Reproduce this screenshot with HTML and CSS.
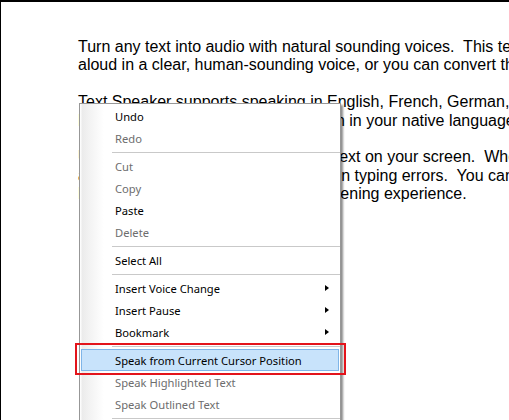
FILE: index.html
```
<!DOCTYPE html>
<html>
<head>
<meta charset="utf-8">
<link rel="stylesheet" href="styles.css">
</head>
<body>
<div class="page">
  <p class="para">
    <span class="ln">Turn any text into audio with natural sounding voices.&nbsp; This text to speech software can read your text</span>
    <span class="ln">aloud in a clear, human-sounding voice, or you can convert the text to audio files.</span>
  </p>
  <p class="para">
    <span class="ln">Text Speaker supports speaking in English, French, German, Spanish and Italian.</span>
    <span class="ln">Hear email and all web pages spoken in your native language.</span>
  </p>
  <p class="para">
    <span class="ln">Use Text Speaker to proofread your text on your screen.&nbsp; When you hear it read</span>
    <span class="ln">aloud, you will easily find any common typing errors.&nbsp; You can even adjust the</span>
    <span class="ln">Bookmark your place for pleasant listening experience.</span>
  </p>
</div>

<div class="menu">
  <div class="item">Undo</div>
  <div class="item off">Redo</div>
  <div class="sep"></div>
  <div class="item off">Cut</div>
  <div class="item off">Copy</div>
  <div class="item">Paste</div>
  <div class="item off">Delete</div>
  <div class="sep"></div>
  <div class="item">Select All</div>
  <div class="sep"></div>
  <div class="item">Insert Voice Change<span class="arrow"></span></div>
  <div class="item">Insert Pause<span class="arrow"></span></div>
  <div class="item">Bookmark<span class="arrow"></span></div>
  <div class="sep"></div>
  <div class="item hot">Speak from Current Cursor Position</div>
  <div class="item off">Speak Highlighted Text</div>
  <div class="item off">Speak Outlined Text</div>
  <div class="sep"></div>
</div>

<div class="callout"></div>
</body>
</html>
```

FILE: styles.css
```
html, body {
  margin: 0;
  padding: 0;
  background: #fff;
}
body {
  width: 509px;
  height: 420px;
  overflow: hidden;
  position: relative;
}
.page {
  box-sizing: border-box;
  height: 420px;
  overflow: hidden;
  border-top: 2px solid #000;
  border-left: 1px solid #000;
  padding: 36px 0 0 77px;
  font-family: "Liberation Sans", Arial, sans-serif;
  font-size: 16px;
  line-height: 18.4px;
  color: #000;
}
.para {
  margin: 0 0 18.4px 0;
}
.ln {
  display: block;
  white-space: nowrap;
}
.menu {
  position: absolute;
  left: 79px;
  top: 103px;
  width: 260px;
  height: 330px;
  border: 1px solid #979797;
  padding-top: 1px;
  background: linear-gradient(to right, #fcfcfc 0, #fcfcfc 1px, #ebebeb 2px, #f3f3f3 10px, #fbfbfb 19px, #fff 24px);
  box-shadow: 2px 2px 2px rgba(0, 0, 0, 0.45);
  font-family: "Noto Sans", "Open Sans", sans-serif;
  font-size: 11.2px;
  color: #000;
}
.item {
  box-sizing: border-box;
  height: 22px;
  margin: 0 1px;
  padding-left: 33px;
  border: 1px solid transparent;
  display: flex;
  align-items: center;
  white-space: nowrap;
}
.item.off {
  color: #6d6d6d;
}
.item.hot {
  background: #c8e3fb;
  border-color: #7fb5e8;
}
.arrow {
  margin-left: auto;
  margin-right: 9px;
  width: 0;
  height: 0;
  border-left: 4px solid #000;
  border-top: 3.5px solid transparent;
  border-bottom: 3.5px solid transparent;
}
.sep {
  height: 6px;
  padding-left: 32px;
  display: flex;
  align-items: center;
}
.sep::before {
  content: "";
  flex: 1;
  height: 1px;
  background: #c9c9c9;
}
.callout {
  position: absolute;
  left: 75px;
  top: 343px;
  width: 267px;
  height: 28px;
  border: 2px solid #e3141b;
}
```
